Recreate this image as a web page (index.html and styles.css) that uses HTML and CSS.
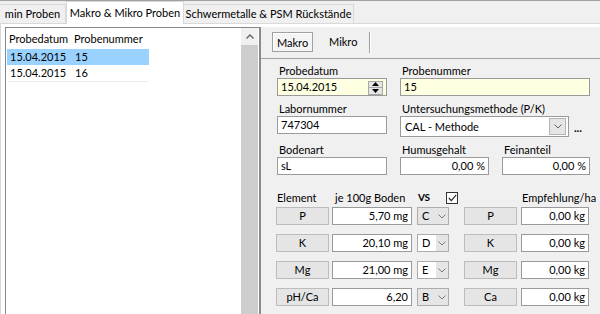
FILE: index.html
```html
<!DOCTYPE html>
<html lang="de">
<head>
  <meta charset="UTF-8">
  <title>Makro &amp; Mikro Proben</title>
  <link rel="stylesheet" href="styles.css">
</head>
<body>
  <div class="window">
    <div class="tabs">
      <div class="tab t1">min Proben</div>
      <div class="tab t2 active">Makro &amp; Mikro Proben</div>
      <div class="tab t3">Schwermetalle &amp; PSM Rückstände</div>
    </div>
    <div class="panel">
      <div class="list">
        <div class="list-body">
          <div class="row head"><span class="c1">Probedatum</span><span>Probenummer</span></div>
          <div class="row sel"><span class="c1">15.04.2015</span><span>15</span></div>
          <div class="row last"><span class="c1">15.04.2015</span><span>16</span></div>
        </div>
        <div class="scroll">
          <div class="scroll-up">
            <svg width="8" height="5" viewBox="0 0 8 5"><path d="M0.5 4.5 L4 1 L7.5 4.5" fill="none" stroke="#606060" stroke-width="1.3"/></svg>
          </div>
          <div class="thumb"></div>
        </div>
      </div>

      <div class="detail">
        <div class="subtabs">
          <div class="subtab on">Makro</div>
          <div class="subtab">Mikro</div>
        </div>
        <div class="subpage">
          <div class="fields">
            <label class="lbl">Probedatum</label>
            <label class="lbl span2">Probenummer</label>

            <div class="input yellow date">
              <span>15.04.2015</span>
              <div class="spin">
                <div class="spin-btn"><svg width="7" height="4" viewBox="0 0 7 4"><path d="M0 4 L3.5 0 L7 4 Z" fill="#000"/></svg></div>
                <div class="spin-btn"><svg width="7" height="4" viewBox="0 0 7 4"><path d="M0 0 L3.5 4 L7 0 Z" fill="#000"/></svg></div>
              </div>
            </div>
            <div class="input yellow span2">15</div>

            <label class="lbl">Labornummer</label>
            <label class="lbl span2">Untersuchungsmethode (P/K)</label>

            <div class="input">747304</div>
            <div class="combo-row span2">
              <div class="combo big">
                <span>CAL - Methode</span>
                <div class="drop">
                  <svg width="8" height="5" viewBox="0 0 8 5"><path d="M0.5 0.5 L4 4 L7.5 0.5" fill="none" stroke="#606060" stroke-width="1"/></svg>
                </div>
              </div>
              <span class="more">...</span>
            </div>

            <label class="lbl">Bodenart</label>
            <label class="lbl">Humusgehalt</label>
            <label class="lbl">Feinanteil</label>

            <div class="input">sL</div>
            <div class="input num">0,00 %</div>
            <div class="input num">0,00 %</div>
          </div>

          <div class="values-head">
            <span>Element</span>
            <span class="h2">je 100g Boden</span>
            <span class="vs">VS <span class="check"><svg width="9" height="8" viewBox="0 0 9 8"><path d="M0.8 4 L3.3 6.6 L8.2 0.8" fill="none" stroke="#222" stroke-width="1.1"/></svg></span></span>
            <span></span>
            <span>Empfehlung/ha</span>
          </div>

          <div class="values">
            <div class="btn">P</div>
            <div class="input num w80">5,70 mg</div>
            <div class="combo small grey"><span>C</span><div class="arrow"><svg width="8" height="5" viewBox="0 0 8 5"><path d="M0.5 0.5 L4 4 L7.5 0.5" fill="none" stroke="#7a7a7a" stroke-width="1"/></svg></div></div>
            <div class="btn">P</div>
            <div class="input num w68">0,00 kg</div>

            <div class="btn">K</div>
            <div class="input num w80">20,10 mg</div>
            <div class="combo small"><span>D</span><div class="arrow"><svg width="8" height="5" viewBox="0 0 8 5"><path d="M0.5 0.5 L4 4 L7.5 0.5" fill="none" stroke="#7a7a7a" stroke-width="1"/></svg></div></div>
            <div class="btn">K</div>
            <div class="input num w68">0,00 kg</div>

            <div class="btn">Mg</div>
            <div class="input num w80">21,00 mg</div>
            <div class="combo small"><span>E</span><div class="arrow"><svg width="8" height="5" viewBox="0 0 8 5"><path d="M0.5 0.5 L4 4 L7.5 0.5" fill="none" stroke="#7a7a7a" stroke-width="1"/></svg></div></div>
            <div class="btn">Mg</div>
            <div class="input num w68">0,00 kg</div>

            <div class="btn">pH/Ca</div>
            <div class="input num w80">6,20</div>
            <div class="combo small grey"><span>B</span><div class="arrow"><svg width="8" height="5" viewBox="0 0 8 5"><path d="M0.5 0.5 L4 4 L7.5 0.5" fill="none" stroke="#7a7a7a" stroke-width="1"/></svg></div></div>
            <div class="btn">Ca</div>
            <div class="input num w68">0,00 kg</div>
          </div>
        </div>
      </div>
    </div>
  </div>
</body>
</html>
```

FILE: styles.css
```css
* { box-sizing: border-box; }
body {
  margin: 0;
  font-family: Lato, "Noto Sans", sans-serif;
  font-size: 11px;
  color: #000;
  background-color: #f0f0f0;
  width: 600px;
  height: 314px;
  overflow: hidden;
}
.window { border-top: 1px solid #a0a0a0; height: 314px; }

/* outer tabs */
.tabs { display: flex; align-items: flex-end; height: 22px; }
.tab {
  height: 19px;
  line-height: 18px;
  text-align: center;
  background-color: #f0f0f0;
  border: 1px solid #d9d9d9;
  border-bottom: none;
}
.t1 { width: 66px; border-left: none; }
.t2 { width: 118px; }
.t3 { width: 170px; border-left: none; }
.tab.active {
  height: 23px;
  line-height: 22px;
  background-color: #fff;
  margin-bottom: -1px;
  position: relative;
  z-index: 1;
}
.panel {
  display: flex;
  height: 291px;
  background-color: #f0f0f0;
  border-top: 1px solid #d9d9d9;
  border-left: 1px solid #d9d9d9;
  box-shadow: inset 0 3px 0 #fff, inset 4px 0 0 #fff;
  padding: 3px 0 0 4px;
}

/* list */
.list {
  display: flex;
  width: 256px;
  background-color: #fff;
  border-top: 1px solid #828790;
  border-left: 1px solid #828790;
  border-right: 2px solid #8a8a8a;
}
.list-body { flex: 1; padding: 1px 0 0 1px; }
.row { display: flex; height: 16px; line-height: 16px; padding-left: 3px; width: 142px; }
.row.head { height: 20px; line-height: 19px; padding-left: 2px; }
.row.sel { background-color: #99d1ff; }
.row.last { box-shadow: 0 2px 0 -1px #ececec; }
.c1 { width: 65px; }
.scroll { width: 17px; margin-right: 1px; display: flex; flex-direction: column; }
.scroll-up { height: 17px; display: flex; align-items: center; justify-content: center; background-color: #f0f0f0; }
.thumb { flex: 1; background-color: #cdcdcd; }

/* right side */
.detail { flex: 1; display: flex; flex-direction: column; }
.subtabs { display: flex; padding: 5px 0 0 11px; height: 31px; }
.subtab {
  height: 21px;
  line-height: 19px;
  padding: 0 12px;
  border-right: 1px solid #a0a0a0;
  box-shadow: 1px 0 0 #fff;
  margin-left: 4px;
}
.subtab.on {
  margin-left: 0;
  padding: 0 4px;
  width: 41px;
  border: 1px solid #a0a0a0;
  background-color: #f4f4f4;
  box-shadow: inset 1px 1px 0 #fff;
  height: 20px;
}
.subpage {
  flex: 1;
  border-top: 1px solid #a0a0a0;
  padding: 5px 0 0 16px;
}

.fields {
  display: grid;
  grid-template-columns: 110px 89px 88px;
  grid-template-rows: 13px 18px 18px 21px 18px 18px;
  column-gap: 13px;
  row-gap: 1px;
}
.lbl { line-height: 13px; padding-left: 2px; align-self: end; }
.span2 { grid-column: span 2; }
.input {
  height: 18px;
  line-height: 16px;
  padding: 0 3px;
  background-color: #fff;
  border: 1px solid #9a9a9a;
  white-space: nowrap;
}
.input.yellow { background-color: #ffffe1; }
.input.num { text-align: right; }
.date { display: flex; justify-content: space-between; padding-right: 3px; }
.spin { display: flex; flex-direction: column; justify-content: center; padding-top: 1px; }
.spin-btn {
  width: 15px;
  height: 7px;
  display: flex;
  align-items: center;
  justify-content: center;
  background-color: #e6e6e6;
  border: 1px solid #a8a8a8;
}
.spin-btn + .spin-btn { border-top: none; }
.combo-row { display: flex; align-items: flex-end; }
.combo {
  display: flex;
  align-items: center;
  justify-content: space-between;
  background-color: #fff;
  border: 1px solid #9a9a9a;
}
.combo.big { width: 169px; height: 21px; padding: 0 2px 0 4px; margin-top: -1px; }
.drop {
  width: 17px;
  height: 17px;
  display: flex;
  align-items: center;
  justify-content: center;
  background-color: #e5e5e5;
  border: 1px solid #b5b5b5;
}
.more { font-weight: bold; margin: 0 0 3px 5px; }

.values-head, .values {
  display: grid;
  grid-template-columns: 56px 85px 47px 57px 68px;
  margin-left: -1px;
}
.values-head { height: 13px; line-height: 13px; margin-top: 16px; align-items: center; }
.values-head span { padding-left: 1px; }
.values-head .h2 { padding-left: 3px; }
.vs { display: flex; align-items: center; font-weight: bold; font-size: 10px; letter-spacing: -0.3px; }
.check {
  width: 12px;
  height: 12px;
  margin-left: 16px;
  border: 1px solid #333;
  background-color: #fff;
  display: flex;
  align-items: center;
  justify-content: center;
}
.values {
  grid-template-rows: repeat(4, 18px);
  row-gap: 9px;
  margin-top: 3px;
  align-items: center;
}
.btn {
  width: 53px;
  height: 18px;
  line-height: 16px;
  text-align: center;
  background-color: #e5e5e5;
  border: 1px solid #bcbcbc;
}
.w80 { width: 80px; }
.w68 { width: 68px; }
.combo.small { width: 32px; height: 18px; border-color: #acacac; }
.combo.small span { padding-left: 4px; width: 19px; height: 16px; line-height: 16px; background-color: #fff; }
.combo.small.grey, .combo.small.grey span { background-color: #e5e5e5; }
.combo.small .arrow { width: 12px; height: 16px; display: flex; align-items: center; justify-content: center; background-color: #e5e5e5; }
```
